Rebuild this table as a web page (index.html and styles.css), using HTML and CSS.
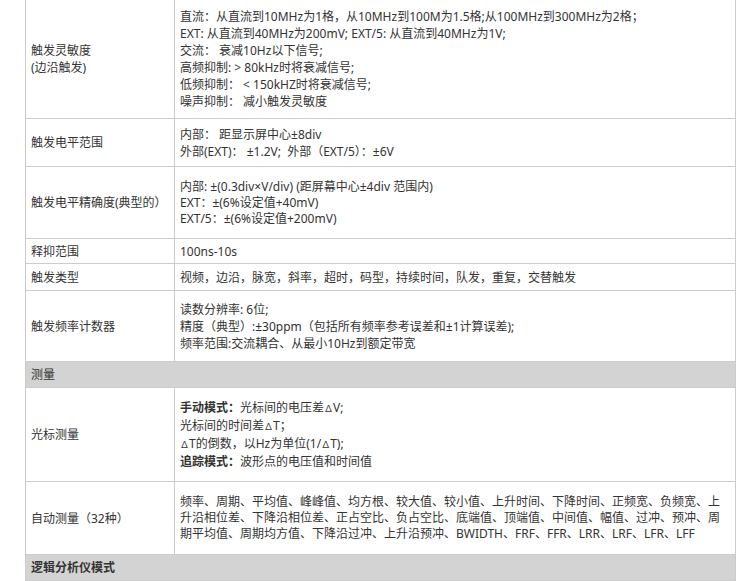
FILE: index.html
```html
<!DOCTYPE html>
<html lang="zh-CN">
<head>
<meta charset="utf-8">
<title>参数</title>
<link rel="stylesheet" href="styles.css">
</head>
<body>
<table class="spec">
  <colgroup><col class="c-name"><col class="c-val"></colgroup>
  <tbody>
    <tr class="r1">
      <td class="name">触发灵敏度<br>(边沿触发)</td>
      <td class="val">直流：从直流到10MHz为1格，从10MHz到100M为1.5格;从100MHz到300MHz为2格；<br>EXT: 从直流到40MHz为200mV; EXT/5: 从直流到40MHz为1V;<br>交流： 衰减10Hz以下信号;<br>高频抑制: &gt; 80kHz时将衰减信号;<br>低频抑制：  &lt; 150kHZ时将衰减信号;<br>噪声抑制： 减小触发灵敏度</td>
    </tr>
    <tr class="r2">
      <td class="name">触发电平范围</td>
      <td class="val">内部： 距显示屏中心±8div<br>外部(EXT)： ±1.2V;&nbsp; 外部（EXT/5）：±6V</td>
    </tr>
    <tr class="r3">
      <td class="name">触发电平精确度(典型的）</td>
      <td class="val tight">内部: ±(0.3div×V/div) (距屏幕中心±4div 范围内)<br>EXT：±(6%设定值+40mV)<br>EXT/5：±(6%设定值+200mV)</td>
    </tr>
    <tr class="r4">
      <td class="name">释抑范围</td>
      <td class="val">100ns-10s</td>
    </tr>
    <tr class="r5">
      <td class="name">触发类型</td>
      <td class="val">视频，边沿，脉宽，斜率，超时，码型，持续时间，队发，重复，交替触发</td>
    </tr>
    <tr class="r6">
      <td class="name">触发频率计数器</td>
      <td class="val">读数分辨率: 6位;<br>精度（典型）:±30ppm（包括所有频率参考误差和±1计算误差);<br>频率范围:交流耦合、从最小10Hz到额定带宽</td>
    </tr>
    <tr class="head">
      <td colspan="2">测量</td>
    </tr>
    <tr class="r7">
      <td class="name">光标测量</td>
      <td class="val"><b>手动模式：</b>光标间的电压差<span class="delta">∆</span>V;<br>光标间的时间差<span class="delta">∆</span>T；<br><span class="delta">∆</span>T的倒数，以Hz为单位(1/<span class="delta">∆</span>T);<br><b>追踪模式：</b>波形点的电压值和时间值</td>
    </tr>
    <tr class="r8">
      <td class="name">自动测量（32种）</td>
      <td class="val tight">频率、周期、平均值、峰峰值、均方根、较大值、较小值、上升时间、下降时间、正频宽、负频宽、上升沿相位差、下降沿相位差、正占空比、负占空比、底端值、顶端值、中间值、幅值、过冲、预冲、周期平均值、周期均方值、下降沿过冲、上升沿预冲、BWIDTH、FRF、FFR、LRR、LRF、LFR、LFF</td>
    </tr>
    <tr class="head strong">
      <td colspan="2">逻辑分析仪模式</td>
    </tr>
  </tbody>
</table>
</body>
</html>
```

FILE: styles.css
```css
html, body {
  margin: 0;
  padding: 0;
  background: #ffffff;
}

body {
  font-family: "Noto Sans", "Noto Sans CJK SC", sans-serif;
  font-size: 12px;
  color: #333333;
  overflow: hidden;
}

.spec {
  border-collapse: collapse;
  table-layout: fixed;
  width: 710px;
  margin: -1px 0 0 25px;
}

.c-name { width: 149px; }
.c-val { width: 561px; }

.spec td {
  border: 1px solid #cccccc;
  padding: 0 10px 0 5px;
  line-height: 17px;
  vertical-align: middle;
  white-space: pre-line;
}

.spec td.tight { line-height: 16px; }

.spec b { font-weight: bold; }

.delta { font-size: 9px; }

.r1 { height: 119px; }
.r2 { height: 48px; }
.r3 { height: 72px; }
.r4 { height: 25px; }
.r5 { height: 27px; }
.r6 { height: 71px; }
.r7 { height: 94px; }
.r8 { height: 73px; }

.head { height: 26px; }
.head td { background: #d3d3d3; }
.head.strong td { font-weight: bold; }
```
